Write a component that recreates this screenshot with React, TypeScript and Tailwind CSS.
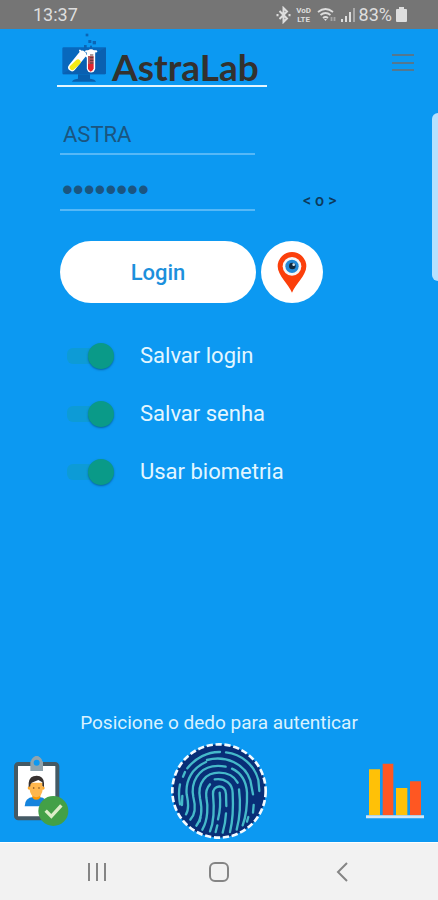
import { useState } from "react";

function StatusBar() {
  return (
    <div className="flex h-[29px] items-center justify-between bg-[#757575] pl-[33px] pr-[31px] text-[#dedede]">
      <span className="text-lg leading-none">13:37</span>
      <div className="flex items-center gap-1">
        <svg className="h-[18px] w-[15px]" viewBox="0 0 15 18" fill="none" stroke="currentColor" strokeWidth="2">
          <path d="M3.5 5 11 12.5 7.5 16V2L11 5.5 3.5 13" />
          <path d="M1.5 8v2.200M13.500 8v2.200" />
        </svg>
        <span className="flex w-[18px] flex-col items-center text-[8px] font-bold leading-[9px]">
          <span>VoD</span>
          <span>LTE</span>
        </span>
        <svg className="h-[16px] w-[20px]" viewBox="0 0 20 16" fill="none" stroke="currentColor" strokeWidth="1.800">
          <path d="M1 5Q8.500-1 16 5M3.500 8Q8.500 4 13.500 8M6 11Q8.500 9 11 11" />
          <path d="M7 12h3l-1.500 2z" fill="currentColor" stroke="none" />
          <path d="M14.500 10v4M17.500 10v4" stroke="#a5a5a5" />
        </svg>
        <svg className="h-[14px] w-[14px]" viewBox="0 0 14 14" fill="currentColor">
          <path d="M0 11h2v3H0zM4 8h2v6H4zM8 4h2v10H8z" />
          <path d="M12 0h2v14h-2z" opacity=".5" />
        </svg>
        <span className="text-lg leading-none">83%</span>
        <svg className="h-[15px] w-[11px]" viewBox="0 0 11 15" fill="currentColor">
          <path d="M3 0h5v2h2q1 0 1 1v11q0 1-1 1H1q-1 0-1-1V3q0-1 1-1h2z" />
        </svg>
      </div>
    </div>
  );
}

function LabMark() {
  return (
    <svg className="mb-[2px] h-[51px] w-[55px] shrink-0" viewBox="171 96 165 153" aria-hidden="true">
      <rect x="187" y="142" width="131" height="81" rx="4" fill="#0868bd" />
      <path d="M187 222 318 142v77q0 4-4 4H191q-4 0-4-1z" fill="#0b5ba8" opacity=".6" />
      <path d="M234 223h36v13q16 2 18 9h-72q2-7 18-9z" fill="#085fae" />
      <path d="M247 164 216 202" stroke="#fff" strokeWidth="23" strokeLinecap="round" />
      <path d="M234 186 217 202" stroke="#f3ea16" strokeWidth="16" strokeLinecap="round" />
      <path d="M240 152 262 170" stroke="#fff" strokeWidth="6" strokeLinecap="round" />
      <path d="M273 160v45" stroke="#fff" strokeWidth="25" strokeLinecap="round" />
      <path d="M259 154h29" stroke="#fff" strokeWidth="7" strokeLinecap="round" />
      <path d="M264 192h17v13q-1 7-9 10-8-4-8-10z" fill="#e3242f" />
      <path d="M264 168h17v24h-17z" fill="#b9545a" />
      <path d="M270 165h10M270 173h10M270 181h10M270 189h10" stroke="#5d3636" strokeWidth="3" />
      <g fill="#0b65b5">
        <rect x="257" y="101" width="8" height="8" />
        <rect x="265" y="120" width="9" height="9" />
        <rect x="278" y="123" width="10" height="10" />
        <rect x="252" y="135" width="8" height="9" />
        <rect x="270" y="137" width="6" height="7" />
      </g>
    </svg>
  );
}

function Toggle({ id, label }: { id: string; label: string }) {
  const [on, setOn] = useState(true);
  return (
    <div className="flex h-[58px] items-center gap-[26px] pl-[7px]">
      <input
        id={id}
        type="checkbox"
        role="switch"
        checked={on}
        onChange={() => setOn(!on)}
        className="relative h-[26px] w-[47px] shrink-0 appearance-none before:absolute before:left-0 before:top-[5px] before:h-4 before:w-10 before:rounded-md before:bg-[#0d9bd6] after:absolute after:left-0 after:top-0 after:size-[26px] after:rounded-full after:bg-[#0a9a88] after:shadow-[0_1px_2px_rgba(0,50,90,0.5)] checked:after:left-[21px]"
      />
      <label htmlFor={id} className="text-[22px] leading-7 text-[#e3f6ff]">
        {label}
      </label>
    </div>
  );
}

function PinIcon() {
  return (
    <svg className="h-[41px] w-[30px]" viewBox="0 0 90 123" aria-hidden="true">
      <path d="M45 122C35 98 2 70 2 43a43 43 0 0 1 86 0c0 27-33 55-43 79z" fill="#fb3f0b" />
      <circle cx="45" cy="43" r="28" fill="#f4f6f8" />
      <circle cx="45" cy="43" r="20" fill="#2389d6" />
      <circle cx="46" cy="42" r="10" fill="#12293d" />
      <circle cx="50" cy="38" r="4" fill="#cfe6f5" />
    </svg>
  );
}

function BadgeIcon() {
  return (
    <svg className="h-[72px] w-[56px]" viewBox="48 44 168 216" aria-hidden="true">
      <rect x="54" y="71" width="124" height="163" rx="7" fill="#fff" stroke="#455a64" strokeWidth="12" />
      <path d="M97 92V66q0-5 5-5h2a12 14 0 0 1 24 0h2q5 0 5 5v26z" fill="#90a4ae" />
      <circle cx="116" cy="65" r="17" fill="#90a4ae" />
      <circle cx="116" cy="67" r="9" fill="#0c99f2" />
      <path d="M80 198q0-26 26-28h18q24 2 26 28z" fill="#1584dd" />
      <path d="M103 158h24v14q-12 13-24 0z" fill="#ff9800" />
      <circle cx="94" cy="143" r="5" fill="#ffa726" />
      <circle cx="135" cy="143" r="5" fill="#ffa726" />
      <path d="M95 127h39v20q-1 22-19 24-19-2-20-24z" fill="#ffb74d" />
      <path d="M92 140v-12q2-22 24-22 21 1 22 22v12l-5-4v-10l-12-7-20 8-4 6v5z" fill="#37312f" />
      <circle cx="107" cy="143" r="2.500" fill="#784719" />
      <circle cx="123" cy="143" r="2.500" fill="#784719" />
      <circle cx="166" cy="212" r="45" fill="#43a047" />
      <path d="m143 211 17 17 30-33" fill="none" stroke="#dcedc8" strokeWidth="10" />
    </svg>
  );
}

function FingerprintIcon() {
  return (
    <svg className="size-24" viewBox="34 21 288 288" aria-hidden="true">
      <circle cx="178" cy="165" r="140" fill="#082e77" />
      <circle cx="178" cy="165" r="140" fill="none" stroke="#f2faff" strokeWidth="8" strokeDasharray="19 8" />
      <g fill="none" stroke="#45b9c9" strokeWidth="7" strokeLinecap="round">
        <path d="M180 170C183 200 181 228 175 250" />
        <path d="M151 286C164 255 163 205 160 174C158 146 198 142 199 174L200 210" />
        <path d="M199 232C198 253 195 270 189 290M173 268 168 288" />
        <path d="M128 281C146 250 145 208 140 184Q137 160 151 145" />
        <path d="M165 130C197 125 219 144 219 171C221 210 221 248 211 288" />
        <path d="M110 269C130 244 127 214 121 187C112 139 140 110 178 110C203 110 224 121 234 140" />
        <path d="M238 160C243 199 242 240 231 281" />
        <path d="M92 251C112 230 106 202 101 183C92 138 118 98 158 91Q178 88 198 92" />
        <path d="M217 98C247 112 260 139 262 170C263 203 261 235 249 268" />
        <path d="M79 235C91 217 84 191 81 175C77 132 98 96 139 78" />
        <path d="M142 72C198 57 255 83 272 133L280 175" />
        <path d="M282 207 280 230M266 243 262 257" />
        <path d="M61 205C58 187 57 163 61 145M70 122 76 108" />
        <path d="M83 97C107 66 145 47 181 48" />
        <path d="M199 49C246 54 285 88 296 132L299 165" />
        <path d="M122 245 120 256M68 180 67 207" />
      </g>
    </svg>
  );
}

function ChartIcon() {
  return (
    <svg className="h-[56px] w-[58px]" viewBox="0 0 174 168" aria-hidden="true">
      <path d="M9 19h33v138H9zM90 75h34v82H90z" fill="#ffc107" />
      <path d="M50 2h32v155H50zM132 55h33v102h-33z" fill="#ff5722" />
      <path d="M0 157h174v9H0z" fill="#cfe5f5" />
    </svg>
  );
}

function NavBar() {
  return (
    <nav className="grid h-[58px] grid-cols-[97px_1fr_97px] items-center border-t border-white bg-[#f2f2f2] px-12 text-[#858585]">
      <button type="button" aria-label="Recentes" className="flex justify-center">
        <svg className="h-5 w-5" viewBox="0 0 20 20" fill="none" stroke="currentColor" strokeWidth="2">
          <path d="M2 1v18M10 1v18M18 1v18" />
        </svg>
      </button>
      <button type="button" aria-label="Início" className="flex justify-center">
        <svg className="h-5 w-5" viewBox="0 0 20 20" fill="none" stroke="currentColor" strokeWidth="2">
          <rect x="1" y="1" width="18" height="18" rx="5" />
        </svg>
      </button>
      <button type="button" aria-label="Voltar" className="flex justify-center">
        <svg className="h-5 w-5" viewBox="0 0 20 20" fill="none" stroke="currentColor" strokeWidth="2">
          <path d="M15 1 6 10l9 9" />
        </svg>
      </button>
    </nav>
  );
}

export default function App() {
  const [user, setUser] = useState("ASTRA");
  const [password, setPassword] = useState("astralab");
  const [visible, setVisible] = useState(false);

  return (
    <div className="flex min-h-screen flex-col bg-[#0c99f2] font-[Roboto,sans-serif]">
      <StatusBar />
      <main className="relative flex flex-1 flex-col">
        <div className="absolute right-0 top-[84px] h-[168px] w-[6px] rounded-l-md bg-[#b5e1ff]" />
        <header className="flex items-start justify-between pl-[57px] pr-6">
          <h1 className="flex h-[58px] items-end border-b-2 border-[#e3f6ff]">
            <LabMark />
            <span className="pr-2 font-[Lato,sans-serif] text-[37px] font-bold leading-9 text-[#33312f]">AstraLab</span>
          </h1>
          <button type="button" aria-label="Menu" className="mt-6 text-[#54788f]">
            <svg className="h-5 w-[22px]" viewBox="0 0 22 20" stroke="currentColor" strokeWidth="2">
              <path d="M0 2h22M0 10h22M0 17h22" />
            </svg>
          </button>
        </header>

        <form className="mt-7 pl-[60px] pr-6" onSubmit={(e) => e.preventDefault()}>
          <input
            aria-label="Usuário"
            value={user}
            onChange={(e) => setUser(e.target.value)}
            className="block h-10 w-[195px] border-b-2 border-[#56b8f7] bg-transparent px-[3px] text-[22px] text-[#1b5580] outline-none"
          />
          <div className="mt-4 flex items-end gap-12">
            <input
              aria-label="Senha"
              type={visible ? "text" : "password"}
              value={password}
              onChange={(e) => setPassword(e.target.value)}
              className="block h-10 w-[195px] border-b-2 border-[#56b8f7] bg-transparent px-[2px] font-['Liberation_Sans',sans-serif] text-[31px] text-[#1b5580] outline-none"
            />
            <button
              type="button"
              aria-label="Mostrar senha"
              onClick={() => setVisible(!visible)}
              className="text-base font-medium leading-5 text-[#0d3a5c]"
            >
              &lt; o &gt;
            </button>
          </div>

          <div className="mt-[30px] flex gap-[5px]">
            <button type="submit" className="h-[62px] w-[196px] rounded-full bg-white text-[22px] font-medium text-[#1c90dc]">
              Login
            </button>
            <button
              type="button"
              aria-label="Localização"
              className="flex size-[62px] items-center justify-center rounded-full bg-white"
            >
              <PinIcon />
            </button>
          </div>

          <div className="mt-6">
            <Toggle id="save-login" label="Salvar login" />
            <Toggle id="save-password" label="Salvar senha" />
            <Toggle id="use-biometrics" label="Usar biometria" />
          </div>
        </form>

        <footer className="mt-auto pb-[3px]">
          <p className="text-center text-[19px] leading-6 text-[#d9f2ff]">Posicione o dedo para autenticar</p>
          <div className="mt-2 grid grid-cols-[1fr_auto_1fr] items-center px-[14px]">
            <button type="button" aria-label="Cadastro" className="justify-self-start">
              <BadgeIcon />
            </button>
            <button type="button" aria-label="Autenticar">
              <FingerprintIcon />
            </button>
            <button type="button" aria-label="Relatórios" className="justify-self-end">
              <ChartIcon />
            </button>
          </div>
        </footer>
      </main>
      <NavBar />
    </div>
  );
}
